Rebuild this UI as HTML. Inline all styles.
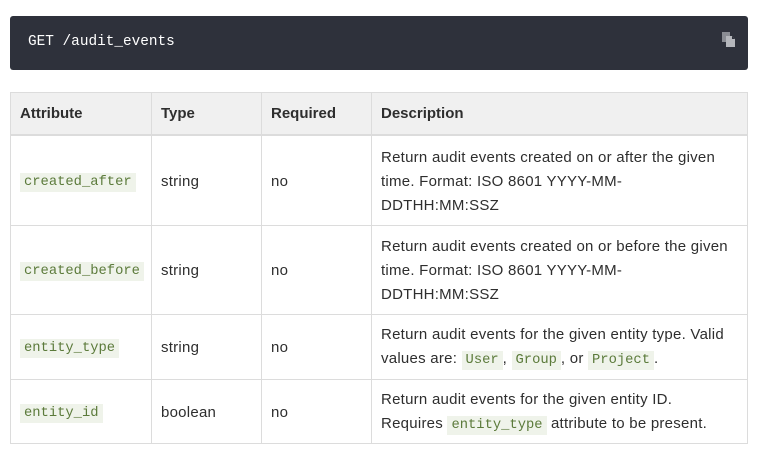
<!DOCTYPE html>
<html><head><style>
body{margin:0;background:#fff;font-family:"Liberation Sans",sans-serif;font-size:15px;letter-spacing:0.25px;color:#2e2e2e;}
.code{position:absolute;left:10px;top:16px;width:738px;height:54px;background:#2e313b;border-radius:3px;}
.code span{position:absolute;left:18px;top:18px;color:#fff;font-family:"Liberation Mono",monospace;font-size:14.4px;letter-spacing:0;}
table{position:absolute;left:10px;top:92px;width:738px;border-collapse:collapse;table-layout:fixed;}
th,td{border:1px solid #dcdcdc;padding:3px 9px 0;text-align:left;vertical-align:middle;line-height:24px;}
th{background:#f0f0f0;height:40px;padding-top:1px;font-weight:bold;letter-spacing:0;border-bottom:2px solid #dcdcdc;}
code{font-family:"Liberation Mono",monospace;font-size:13.8px;letter-spacing:0;color:#5b7a3a;background:#eff3ea;padding:2px 4px;}
</style></head><body>
<div class="code"><span>GET /audit_events</span>
<svg style="position:absolute;left:711px;top:16px" width="16" height="16" viewBox="0 0 16 16"><rect x="1" y="0" width="8" height="10" fill="#8a8c93"/><path d="M5 4h6l3 3v8H5z" fill="#b5b7bc"/><path d="M11 4v3h3" fill="#2e313b"/></svg></div>
<table>
<colgroup><col style="width:141px"><col style="width:110px"><col style="width:110px"><col></colgroup>
<tr><th>Attribute</th><th>Type</th><th>Required</th><th>Description</th></tr>
<tr style="height:90px"><td><code>created_after</code></td><td>string</td><td>no</td><td>Return audit events created on or after the given time. Format: ISO 8601 YYYY-MM-DDTHH:MM:SSZ</td></tr>
<tr style="height:89px"><td><code>created_before</code></td><td>string</td><td>no</td><td>Return audit events created on or before the given time. Format: ISO 8601 YYYY-MM-DDTHH:MM:SSZ</td></tr>
<tr style="height:65px"><td><code>entity_type</code></td><td>string</td><td>no</td><td>Return audit events for the given entity type. Valid values are: <code>User</code>, <code>Group</code>, or <code>Project</code>.</td></tr>
<tr style="height:64px"><td><code>entity_id</code></td><td>boolean</td><td>no</td><td>Return audit events for the given entity ID. Requires <code>entity_type</code> attribute to be present.</td></tr>
</table>
</body></html>
